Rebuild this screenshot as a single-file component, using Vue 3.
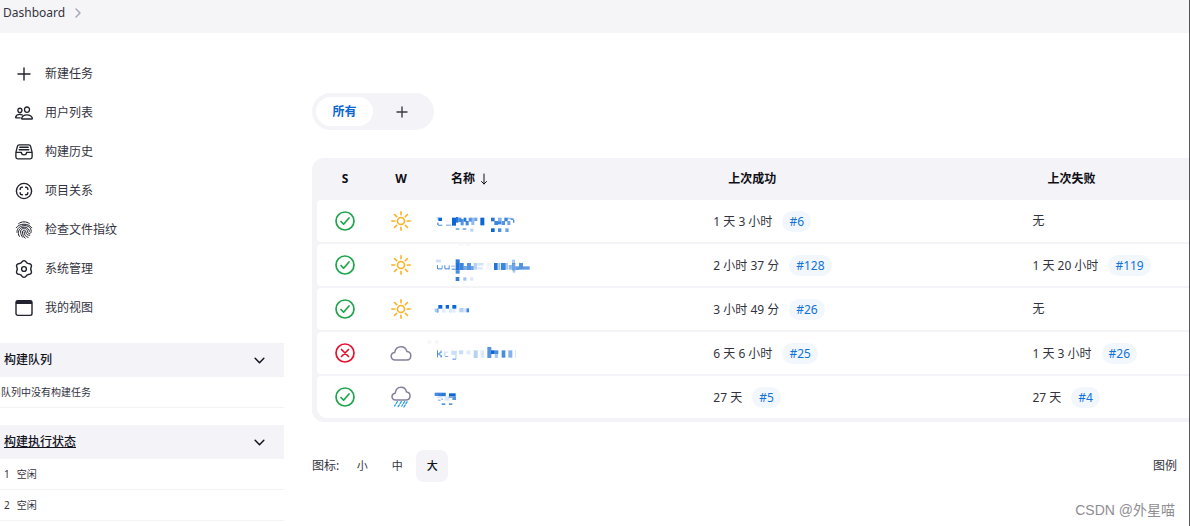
<script setup>
import { ref } from 'vue'

const tasks = [
  { label: '新建任务', icon: 'plus' },
  { label: '用户列表', icon: 'people' },
  { label: '构建历史', icon: 'tray' },
  { label: '项目关系', icon: 'relation' },
  { label: '检查文件指纹', icon: 'fingerprint' },
  { label: '系统管理', icon: 'gear' },
  { label: '我的视图', icon: 'window' },
]

const executors = [1, 2]

// Six soft lobes around a circle, one pointing straight up
const gear = 'M' + Array.from({ length: 72 }, (_, i) => {
  const a = (i * Math.PI) / 36
  const r = 7.5 + 0.8 * Math.cos(6 * a)
  return (9 + r * Math.sin(a)).toFixed(2) + ' ' + (9 - r * Math.cos(a)).toFixed(2)
}).join('L') + 'z'

// Masked job names: [x, y, width, height, opacity], three units to a pixel
const jobs = [
  {
    ok: true, weather: 'sun', box: '27 -12 360 120',
    success: '1 天 3 小时', successNo: '#6', fail: '无', failNo: '',
    blocks: [
      [55, 38, 11, 10, 1], [50, 36, 6, 8, .25], [51, 53, 5, 7, .6], [54, 59, 13, 4, .55], [78, 59, 15, 3, .6],
      [96, 38, 12, 24, 1], [108, 36, 7, 17, .9], [115, 38, 9, 13, .75], [122, 42, 9, 19, .7], [131, 38, 8, 12, .9], [137, 48, 9, 13, .8], [146, 38, 9, 12, .7], [154, 38, 9, 22, .45], [163, 38, 9, 10, .6],
      [181, 38, 12, 23, 1], [107, 70, 11, 4, .7], [128, 70, 11, 4, .7], [151, 71, 9, 9, .3],
      [213, 38, 11, 11, .9], [223, 48, 11, 12, .8], [234, 38, 11, 11, .5], [234, 49, 10, 9, .8], [245, 48, 10, 12, .7], [253, 38, 10, 11, .8], [262, 48, 9, 12, .6], [262, 38, 12, 5, .4], [272, 40, 9, 5, .7], [279, 45, 4, 8, .8],
      [213, 70, 11, 11, 1], [234, 70, 10, 11, .75], [256, 70, 10, 11, .6],
    ],
    smudges: [[118, 112, 12, 10], [139, 112, 12, 10]],
  },
  {
    ok: true, weather: 'sun', box: '27 120 360 120',
    success: '2 小时 37 分', successNo: '#128', fail: '1 天 20 小时', failNo: '#119',
    blocks: [
      [48, 164, 15, 8, .2], [51, 180, 3, 12, .7], [53, 190, 13, 3, .8], [65, 181, 3, 10, .6], [73, 181, 3, 10, .8], [75, 190, 12, 3, .8], [86, 181, 3, 12, .7], [94, 182, 11, 3, .5], [95, 191, 12, 3, .8],
      [107, 163, 12, 11, .85], [107, 174, 12, 22, .9], [107, 196, 12, 10, .75], [119, 174, 12, 21, .8], [131, 183, 10, 12, .55], [141, 174, 12, 21, .7], [153, 183, 8, 12, .6], [161, 174, 10, 20, .3], [172, 174, 18, 8, .18], [172, 186, 16, 8, .14],
      [200, 174, 14, 20, .06], [222, 174, 11, 21, .9], [235, 174, 6, 21, .4], [243, 174, 14, 21, .8], [257, 174, 7, 20, .35], [266, 180, 10, 14, .45], [276, 164, 9, 12, .35], [276, 174, 10, 22, .6], [278, 195, 8, 8, .35], [286, 184, 11, 11, .65], [297, 174, 12, 20, .7], [309, 184, 20, 10, .65],
      [107, 216, 11, 12, .85], [130, 217, 9, 10, .4], [150, 217, 10, 10, .15],
    ],
    smudges: [],
  },
  {
    ok: true, weather: 'sun', box: '27 -3 360 120',
    success: '3 小时 49 分', successNo: '#26', fail: '无', failNo: '',
    blocks: [
      [44, 56, 12, 11, .35], [51, 54, 4, 15, .35], [55, 45, 12, 11, 1], [77, 45, 10, 11, 1], [97, 45, 12, 11, 1],
      [66, 56, 10, 12, .12], [87, 56, 9, 12, .15], [97, 56, 10, 12, .12], [118, 54, 13, 13, .3], [133, 55, 8, 12, .2], [140, 55, 7, 12, .8],
    ],
    smudges: [],
  },
  {
    ok: false, weather: 'cloud', box: '27 129 360 120',
    success: '6 天 6 小时', successNo: '#25', fail: '1 天 3 小时', failNo: '#26',
    blocks: [
      [51, 181, 3, 21, .75], [54, 190, 5, 4, .7], [61, 182, 4, 7, .6], [57, 187, 5, 4, .6], [58, 193, 4, 4, .7], [61, 196, 5, 6, .7], [73, 185, 12, 3, .2], [73, 188, 3, 9, .35], [75, 198, 10, 3, .5], [94, 182, 12, 13, .2], [97, 206, 11, 3, .7], [107, 183, 2, 24, .5],
      [117, 181, 13, 12, .22], [139, 181, 13, 12, .12], [161, 181, 12, 23, .3], [182, 181, 11, 22, .14], [202, 171, 12, 33, .7], [213, 181, 11, 11, 1], [224, 181, 11, 11, .75], [224, 192, 10, 12, .35], [245, 181, 11, 22, .75], [265, 181, 12, 22, .5], [286, 180, 2, 24, .25],
    ],
    smudges: [[23, 151, 11, 10], [45, 151, 11, 10]],
  },
  {
    ok: true, weather: 'rain', box: '27 261 360 120',
    success: '27 天', successNo: '#5', fail: '27 天', failNo: '#4',
    blocks: [
      [44, 308, 33, 10, .75], [55, 311, 12, 8, .3], [65, 309, 12, 10, .5], [51, 319, 14, 5, .15], [54, 329, 8, 3, .6], [64, 325, 5, 5, .4], [74, 319, 14, 13, .14], [87, 310, 20, 9, 1], [86, 319, 10, 5, .5], [97, 319, 11, 11, .7],
      [65, 340, 11, 5, .7], [87, 340, 10, 5, .7],
    ],
    smudges: [],
  },
]

const sizes = ['小', '中', '大']
const size = ref('大')
</script>

<template>
  <div class="page">
    <header class="crumbs">
      <a href="#">Dashboard</a>
      <svg class="crumb-arrow" viewBox="0 0 10 10" aria-hidden="true"><path d="M3 1l4 4-4 4" /></svg>
    </header>

    <div class="body">
      <aside class="side">
        <nav class="tasks">
          <a v-for="t in tasks" :key="t.label" href="#" class="task">
            <svg v-if="t.icon === 'plus'" class="ico" viewBox="0 0 18 18"><path d="M9 3v12M3 9h12" /></svg>
            <svg v-else-if="t.icon === 'people'" class="ico io" viewBox="16 16 480 480">
              <path d="M402 168c-2.93 40.67-33.1 72-66 72s-63.12-31.32-66-72c-3-42.31 26.37-72 66-72s69 30.46 66 72zM336 304c-65.17 0-127.84 32.37-143.54 95.41-2.08 8.34 3.15 16.59 11.72 16.59h263.65c8.57 0 13.77-8.25 11.72-16.59C463.85 335.36 401.18 304 336 304zM200 185.94c-2.34 32.48-26.72 58.06-53 58.06s-50.7-25.57-53-58.06C91.61 152.15 115.34 128 147 128s55.39 24.77 53 57.94zM206 306c-18.05-8.27-37.93-11.45-59-11.45-52 0-102.1 25.85-114.65 76.2-1.65 6.66 2.53 13.25 9.37 13.25H154" />
            </svg>
            <svg v-else-if="t.icon === 'tray'" class="ico io" viewBox="16 16 480 480">
              <path d="M384 64H128c-26 0-43 14-48 40L40 264v128a48 48 0 0048 48h336a48 48 0 0048-48V264l-40-160c-5-27-23-40-48-40zM40 264h146M326 264h146M186 264a70 70 0 00140 0M144 128h224M128 196h256" />
            </svg>
            <svg v-else-if="t.icon === 'relation'" class="ico" viewBox="0 0 18 18">
              <circle cx="9" cy="9" r="7.6" />
              <path d="M5.2 7.4V7A1.8 1.8 0 017 5.2h.4M10.6 5.2h.4A1.8 1.8 0 0112.8 7v.4M12.8 10.6v.4a1.8 1.8 0 01-1.8 1.8h-.4M7.4 12.8H7A1.8 1.8 0 015.2 11v-.4" />
            </svg>
            <svg v-else-if="t.icon === 'fingerprint'" class="ico fine" viewBox="0 0 18 18">
              <path d="M3.6 2.6C6.6.2 11.4.2 14.4 2.6M1.3 6.8C4 1.9 14 1.9 16.7 6.8M2 11.4C1 3.2 16.3 1.8 16.2 10.4c0 2.7-3.4 2.8-3.6.3-.3-4.8-7.3-4.2-7 .4.1 1.8.8 3.5 2 5.1M3.6 13.8C1.5 4.2 14.3 4.2 14.4 10.4M7.4 11c-.2-2.3 3.3-2.6 3.5-.1.2 2.5 1.8 3.7 3.9 3.3M9.1 10.8c.1 3.2 1.5 5 4 5.5M7.4 11c.1 2.6 1 4.6 2.8 6.2M3.6 13.8l.8 1.5" />
            </svg>
            <svg v-else-if="t.icon === 'gear'" class="ico" viewBox="0 0 18 18">
              <path :d="gear" />
              <circle cx="9" cy="9" r="2.4" />
            </svg>
            <svg v-else class="ico" viewBox="0 0 18 18">
              <rect x="1" y="1.8" width="16" height="14.6" rx="1.8" />
              <path class="solid" d="M1 5V3a1.5 1.5 0 011.5-1.5h13A1.5 1.5 0 0117 3v2z" />
            </svg>
            <span>{{ t.label }}</span>
          </a>
        </nav>

        <section class="pane">
          <h2>
            <span>构建队列</span>
            <button type="button" aria-label="构建队列"><svg viewBox="0 0 12 12"><path d="M2 4l4 4 4-4" /></svg></button>
          </h2>
          <p class="line flush">队列中没有构建任务</p>
        </section>

        <section class="pane">
          <h2>
            <a href="#">构建执行状态</a>
            <button type="button" aria-label="构建执行状态"><svg viewBox="0 0 12 12"><path d="M2 4l4 4 4-4" /></svg></button>
          </h2>
          <p v-for="n in executors" :key="n" class="line"><span>{{ n }}</span><span>空闲</span></p>
        </section>
      </aside>

      <main class="main">
        <div class="tabs">
          <a href="#" class="tab active">所有</a>
          <a href="#" class="tab" aria-label="+"><svg viewBox="0 0 12 12"><path d="M6 1v10M1 6h10" /></svg></a>
        </div>

        <div class="frame">
          <table>
            <colgroup><col class="c-icon"><col class="c-icon"><col class="c-name"><col class="c-ok"><col></colgroup>
            <thead>
              <tr>
                <th class="mid">S</th>
                <th class="mid">W</th>
                <th>名称 <svg class="sort" viewBox="0 0 8 12" aria-hidden="true"><path d="M4 1v10M1.500 8.500L4 11l2.500-2.500" /></svg></th>
                <th>上次成功</th>
                <th>上次失败</th>
              </tr>
            </thead>
            <tbody>
              <tr v-for="(j, i) in jobs" :key="i">
                <td class="mid">
                  <svg class="state" :class="{ bad: !j.ok }" viewBox="0 0 20 20">
                    <circle cx="10" cy="10" r="9" />
                    <path v-if="j.ok" d="M6 10.500l2.600 2.700L14 7" />
                    <path v-else d="M6.500 6.500l7 7M13.500 6.500l-7 7" />
                  </svg>
                </td>
                <td class="mid">
                  <svg v-if="j.weather === 'sun'" class="weather sun" viewBox="0 0 22 22">
                    <circle cx="11" cy="11" r="3.500" />
                    <path d="M11 1.800v3M11 17.200v3M1.800 11h3M17.200 11h3M4.500 4.500l2.100 2.100M15.400 15.400l2.100 2.100M17.500 4.500l-2.100 2.100M6.600 15.400l-2.100 2.100" />
                  </svg>
                  <svg v-else-if="j.weather === 'cloud'" class="weather cloud" viewBox="0 0 22 22">
                    <path d="M5.200 18C2.600 18 1.200 16.300 1.200 14.200c0-2 1.500-3.600 3.500-3.800C5.300 7 7.900 4.800 11 4.800c3 0 5.200 1.900 5.900 4.700 2.300.2 3.900 1.900 3.900 4.200 0 2.500-1.800 4.300-4.300 4.300z" />
                  </svg>
                  <svg v-else class="weather cloud" viewBox="0 0 22 22">
                    <path d="M5.600 14C3.400 14 2 12.500 2 10.600c0-1.800 1.300-3.200 3.200-3.400C5.700 3.600 8 1.300 11 1.300c2.900 0 4.900 1.800 5.500 4.600 2.100.2 3.500 1.800 3.500 3.900 0 2.400-1.600 4.200-4 4.200z" />
                    <path class="drops" d="M7.400 15.600L4.600 20M11.300 15.600l-3.500 5.600M14.600 15.600L11.800 20M17 15.800l-3.200 5.400" />
                  </svg>
                </td>
                <td>
                  <a href="#" class="name" :aria-label="'任务 ' + (i + 1)">
                    <svg :viewBox="j.box">
                      <rect v-for="(s, k) in j.smudges" :key="'s' + k" class="smudge" :x="s[0]" :y="s[1]" :width="s[2]" :height="s[3]" />
                      <rect v-for="(b, k) in j.blocks" :key="k" :x="b[0]" :y="b[1]" :width="b[2]" :height="b[3]" :fill-opacity="b[4]" />
                    </svg>
                  </a>
                </td>
                <td class="when">{{ j.success }}<a href="#" class="build">{{ j.successNo }}</a></td>
                <td class="when">{{ j.fail }}<a v-if="j.failNo" href="#" class="build">{{ j.failNo }}</a></td>
              </tr>
            </tbody>
          </table>
        </div>

        <footer class="foot">
          <span class="foot-label">图标:</span>
          <button v-for="s in sizes" :key="s" type="button" :class="{ on: s === size }" @click="size = s">{{ s }}</button>
          <a href="#" class="legend">图例</a>
        </footer>
      </main>
    </div>
    <div class="mark">CSDN @外星喵</div>
  </div>
</template>

<style>
body {
  margin: 0;
  background: #fff;
}
</style>

<style scoped>
.page {
  position: relative;
  box-sizing: border-box;
  min-height: 100vh;
  border-right: 1px solid #55555a;
  font-family: "Noto Sans", "Noto Sans CJK SC", sans-serif;
  font-size: 12px;
  line-height: 18px;
  color: #333340;
}
a {
  color: inherit;
  text-decoration: none;
}
svg {
  display: block;
  fill: none;
  stroke: currentColor;
  stroke-linecap: round;
  stroke-linejoin: round;
}
button {
  font: inherit;
  color: inherit;
  border: 0;
  padding: 0;
  background: none;
}
.crumbs {
  display: flex;
  align-items: center;
  gap: 8px;
  padding: 4px 3px 11px;
  background: #f5f5f8;
}
.crumb-arrow {
  width: 10px;
  height: 10px;
  color: #a3a3b3;
  stroke-width: 1.4;
}
.body {
  display: flex;
  gap: 28px;
}
.side {
  flex: 0 0 284px;
  padding-top: 21px;
}
.tasks {
  margin-bottom: 16px;
}
.task {
  display: flex;
  align-items: center;
  gap: 12px;
  height: 39px;
  padding-left: 15px;
}
.ico {
  width: 18px;
  height: 18px;
  stroke-width: 1.4;
  color: #22222e;
}
.io {
  stroke-width: 36;
}
.fine {
  stroke-width: 1;
}
.solid {
  fill: currentColor;
  stroke: none;
}
.pane {
  margin-bottom: 17px;
}
.pane:last-child {
  margin-bottom: 0;
}
.pane h2 {
  display: flex;
  align-items: center;
  justify-content: space-between;
  height: 34px;
  margin: 0;
  padding: 0 18px 0 4px;
  background: #f3f3f8;
  font-size: 12px;
  font-weight: 500;
  color: #14141f;
}
.pane h2 a {
  text-decoration: underline;
}
.pane h2 svg {
  width: 13px;
  height: 13px;
  stroke-width: 1.4;
}
.line {
  display: flex;
  align-items: center;
  gap: 7px;
  box-sizing: border-box;
  height: 31px;
  margin: 0;
  padding-left: 4px;
  border-bottom: 1px solid #f3f3f6;
  font-size: 10px;
}
.flush {
  padding-left: 1px;
}
.main {
  flex: 1;
  min-width: 0;
  padding-top: 60px;
}
.tabs {
  display: inline-flex;
  padding: 4px;
  border-radius: 19px;
  background: #f3f3f8;
  vertical-align: top;
}
.tab {
  display: flex;
  align-items: center;
  justify-content: center;
  width: 57px;
  height: 29px;
  border-radius: 15px;
  color: #3c3c48;
}
.tab svg {
  width: 12px;
  height: 12px;
  stroke-width: 1.4;
}
.active {
  background: #fff;
  color: #0b66d0;
  font-weight: 700;
}
.frame {
  margin-top: 28px;
  padding: 0 0 2px 5px;
  border-radius: 12px 0 0 12px;
  background: #f3f3f8;
}
table {
  width: 100%;
  table-layout: fixed;
  border-collapse: separate;
  border-spacing: 0 2px;
}
.c-icon {
  width: 56px;
}
.c-name {
  width: 31.8%;
}
.c-ok {
  width: 36.6%;
}
th {
  height: 38px;
  padding: 0 0 0 22px;
  text-align: left;
  font-weight: 700;
  color: #0e0e14;
}
td {
  height: 42px;
  padding: 0;
  background: #fff;
  vertical-align: middle;
}
td:first-child {
  border-radius: 4px 0 0 4px;
}
tr:last-child td:first-child {
  border-bottom-left-radius: 10px;
}
.mid {
  padding: 0;
  text-align: center;
}
.mid svg {
  margin: 0 auto;
}
.sort {
  display: inline-block;
  width: 8px;
  height: 12px;
  margin-left: 2px;
  vertical-align: -2px;
}
.state {
  width: 20px;
  height: 20px;
  color: #1fa64c;
  stroke-width: 1.7;
}
.bad {
  color: #e6112e;
}
.weather {
  width: 22px;
  height: 22px;
}
.sun {
  color: #fdb022;
  stroke-width: 1.6;
}
.cloud {
  color: #83809c;
  stroke-width: 1.5;
}
.drops {
  stroke: #2a9fe0;
  stroke-width: 1.3;
  stroke-dasharray: 2.2 1.6;
}
.name {
  display: block;
  color: #0b66d6;
}
.name svg {
  width: 120px;
  height: 40px;
  overflow: visible;
  fill: currentColor;
  stroke: none;
}
.smudge {
  fill: #f6f6f8;
}
.when {
  padding-left: 7px;
  white-space: nowrap;
}
.build {
  display: inline-block;
  margin-left: 10px;
  padding: 2px 7px 1px;
  border-radius: 11px;
  background: #f1f7fd;
  color: #1272dc;
}
.foot {
  display: flex;
  align-items: center;
  gap: 3px;
  margin-top: 28px;
  padding-right: 12px;
}
.foot-label {
  margin-right: 4px;
}
.foot button {
  width: 32px;
  height: 32px;
  border-radius: 8px;
  font-size: 11px;
}
.foot .on {
  background: #f3f3f8;
  font-weight: 500;
  color: #14141f;
}
.legend {
  margin-left: auto;
}
.mark {
  position: absolute;
  right: 14px;
  bottom: 6px;
  font-family: "Liberation Sans", "Noto Sans CJK SC", sans-serif;
  font-size: 14px;
  line-height: 20px;
  color: #8e8e92;
}
</style>
